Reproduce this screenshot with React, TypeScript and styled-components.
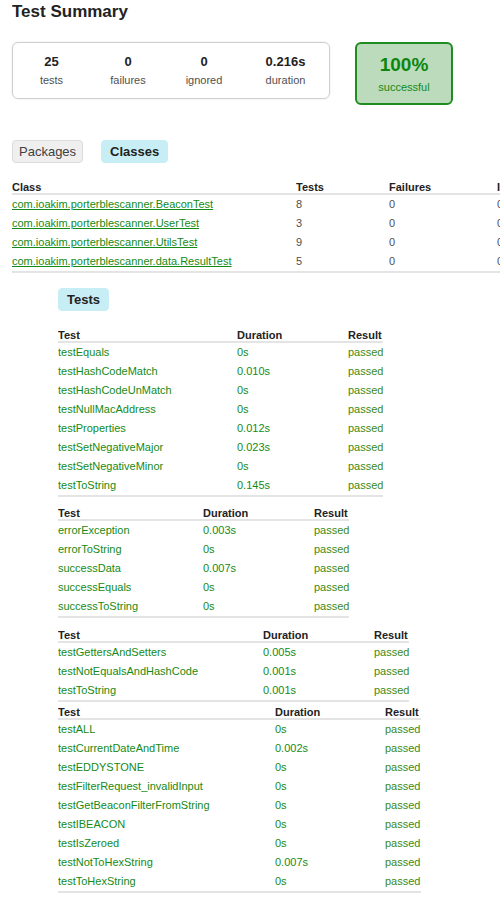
import React from 'react';
import styled, { createGlobalStyle } from 'styled-components';

const GlobalStyle = createGlobalStyle`
  html, body {
    margin: 0;
    padding: 0;
    overflow: hidden;
    background: #ffffff;
  }
  body {
    font-family: "Liberation Sans", Arial, sans-serif;
    color: #303030;
  }
`;

const GREEN = '#168a16';

const classes = [
  { name: 'com.ioakim.porterblescanner.BeaconTest', tests: 8 },
  { name: 'com.ioakim.porterblescanner.UserTest', tests: 3 },
  { name: 'com.ioakim.porterblescanner.UtilsTest', tests: 9 },
  { name: 'com.ioakim.porterblescanner.data.ResultTest', tests: 5 },
];

type TestRow = [string, string];

const testTables: { cols: number[]; gap: number; rows: TestRow[] }[] = [
  {
    cols: [179, 111, 35],
    gap: 18,
    rows: [
      ['testEquals', '0s'],
      ['testHashCodeMatch', '0.010s'],
      ['testHashCodeUnMatch', '0s'],
      ['testNullMacAddress', '0s'],
      ['testProperties', '0.012s'],
      ['testSetNegativeMajor', '0.023s'],
      ['testSetNegativeMinor', '0s'],
      ['testToString', '0.145s'],
    ],
  },
  {
    cols: [145, 111, 35],
    gap: 10,
    rows: [
      ['errorException', '0.003s'],
      ['errorToString', '0s'],
      ['successData', '0.007s'],
      ['successEquals', '0s'],
      ['successToString', '0s'],
    ],
  },
  {
    cols: [205, 111, 35],
    gap: 11,
    rows: [
      ['testGettersAndSetters', '0.005s'],
      ['testNotEqualsAndHashCode', '0.001s'],
      ['testToString', '0.001s'],
    ],
  },
  {
    cols: [217, 110, 36],
    gap: 4,
    rows: [
      ['testALL', '0s'],
      ['testCurrentDateAndTime', '0.002s'],
      ['testEDDYSTONE', '0s'],
      ['testFilterRequest_invalidInput', '0s'],
      ['testGetBeaconFilterFromString', '0s'],
      ['testIBEACON', '0s'],
      ['testIsZeroed', '0s'],
      ['testNotToHexString', '0.007s'],
      ['testToHexString', '0s'],
    ],
  },
];

const Page = styled.div`
  padding: 0 12px;
  width: 600px;
`;

const Title = styled.h1`
  margin: 0;
  font-size: 17px;
  line-height: 23px;
  font-weight: bold;
  color: #222;
`;

const SummaryRow = styled.div`
  display: flex;
  align-items: flex-start;
  gap: 25px;
  margin-top: 19px;
`;

const Counters = styled.div`
  display: grid;
  grid-template-columns: 77px 76px 76px 87px;
  width: 316px;
  height: 55px;
  border: 1px solid #cfcfcf;
  border-radius: 6px;
  box-shadow: 0 0 2px #e0e0e0;
`;

const Counter = styled.div`
  display: flex;
  flex-direction: column;
  align-items: center;
  padding-top: 11px;
`;

const CounterValue = styled.div`
  font-size: 13px;
  line-height: 15px;
  font-weight: bold;
  color: #222;
`;

const CounterLabel = styled.div`
  margin-top: 5px;
  font-size: 11px;
  line-height: 13px;
  color: #505050;
`;

const SuccessBox = styled.div`
  display: flex;
  flex-direction: column;
  align-items: center;
  width: 94px;
  height: 59px;
  background: #bcdbbc;
  border: 2px solid #1f8c1f;
  border-radius: 6px;
  color: ${GREEN};
`;

const SuccessValue = styled.div`
  margin-top: 10px;
  font-size: 19px;
  line-height: 22px;
  font-weight: bold;
  color: #0d860d;
`;

const SuccessLabel = styled.div`
  margin-top: 5px;
  font-size: 11px;
  line-height: 13px;
`;

const TabBar = styled.div<{ $indent?: number; $top: number }>`
  display: flex;
  gap: 18px;
  margin-top: ${(p) => p.$top}px;
  padding-left: ${(p) => p.$indent ?? 0}px;
`;

const Tab = styled.div<{ $active?: boolean }>`
  box-sizing: border-box;
  height: 23px;
  padding: 0 ${(p) => (p.$active ? 8 : 6)}px;
  font-size: 13px;
  line-height: 21px;
  font-weight: ${(p) => (p.$active ? 'bold' : 'normal')};
  color: ${(p) => (p.$active ? '#222' : '#404040')};
  background: ${(p) => (p.$active ? '#c8eef5' : '#efefef')};
  border: 1px solid ${(p) => (p.$active ? '#c8eef5' : '#dcdcdc')};
  border-radius: 4px;
`;

const Table = styled.table<{ $top: number; $indent?: number }>`
  border-collapse: collapse;
  table-layout: fixed;
  margin-top: ${(p) => p.$top}px;
  margin-left: ${(p) => p.$indent ?? 0}px;
  font-size: 11px;

  th {
    padding: 0;
    height: 12px;
    line-height: 12px;
    text-align: left;
    font-weight: bold;
    color: #222;
    border-bottom: 2px solid #e4e4e4;
    white-space: nowrap;
    overflow: hidden;
  }

  td {
    padding: 0;
    height: 19px;
    line-height: 19px;
    text-align: left;
    white-space: nowrap;
    overflow: hidden;
  }

  tbody tr:last-child td {
    border-bottom: 2px solid #e4e4e4;
  }
`;

const ClassLink = styled.a`
  color: ${GREEN};
  text-decoration: underline;
`;

const Cell = styled.td<{ $green?: boolean; $olive?: boolean }>`
  color: ${(p) => (p.$olive ? '#3c8a14' : p.$green ? GREEN : '#505050')};
`;

const Tests = styled.div`
  display: flex;
  flex-direction: column;
  align-items: flex-start;
`;

export default function App() {
  const counters = [
    ['25', 'tests'],
    ['0', 'failures'],
    ['0', 'ignored'],
    ['0.216s', 'duration'],
  ];
  return (
    <>
      <GlobalStyle />
      <Page>
        <Title>Test Summary</Title>
        <SummaryRow>
          <Counters>
            {counters.map(([v, l]) => (
              <Counter key={l}>
                <CounterValue>{v}</CounterValue>
                <CounterLabel>{l}</CounterLabel>
              </Counter>
            ))}
          </Counters>
          <SuccessBox>
            <SuccessValue>100%</SuccessValue>
            <SuccessLabel>successful</SuccessLabel>
          </SuccessBox>
        </SummaryRow>

        <TabBar $top={35}>
          <Tab>Packages</Tab>
          <Tab $active>Classes</Tab>
        </TabBar>

        <Table $top={18}>
          <colgroup>
            <col style={{ width: 284 }} />
            <col style={{ width: 93 }} />
            <col style={{ width: 108 }} />
            <col style={{ width: 3 }} />
          </colgroup>
          <thead>
            <tr>
              <th>Class</th>
              <th>Tests</th>
              <th>Failures</th>
              <th>I</th>
            </tr>
          </thead>
          <tbody>
            {classes.map((c) => (
              <tr key={c.name}>
                <td>
                  <ClassLink href="#">{c.name}</ClassLink>
                </td>
                <Cell>{c.tests}</Cell>
                <Cell>0</Cell>
                <Cell>0</Cell>
              </tr>
            ))}
          </tbody>
        </Table>

        <TabBar $top={15} $indent={46}>
          <Tab $active>Tests</Tab>
        </TabBar>

        <Tests>
          {testTables.map((t, i) => (
            <Table key={i} $top={t.gap} $indent={46}>
              <colgroup>
                {t.cols.map((w, j) => (
                  <col key={j} style={{ width: w }} />
                ))}
              </colgroup>
              <thead>
                <tr>
                  <th>Test</th>
                  <th>Duration</th>
                  <th>Result</th>
                </tr>
              </thead>
              <tbody>
                {t.rows.map(([name, dur], k) => (
                  <tr key={k}>
                    <Cell $green>{name}</Cell>
                    <Cell $green>{dur}</Cell>
                    <Cell $olive>passed</Cell>
                  </tr>
                ))}
              </tbody>
            </Table>
          ))}
        </Tests>
      </Page>
    </>
  );
}
